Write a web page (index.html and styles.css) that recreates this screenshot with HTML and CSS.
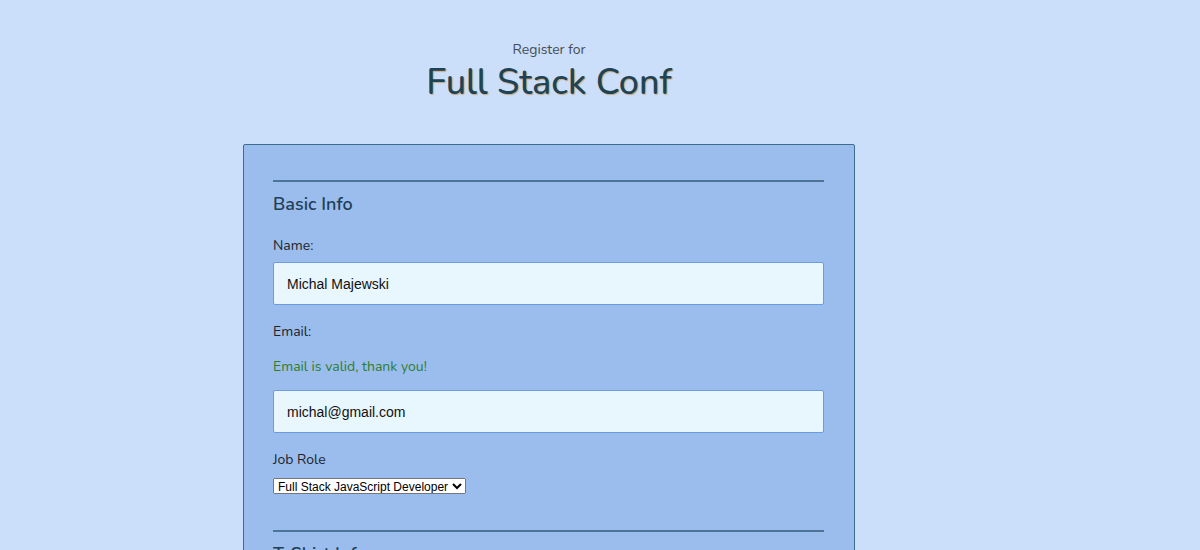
FILE: index.html
```html
<!DOCTYPE html>
<html>
<head>
<meta charset="utf-8">
<link rel="stylesheet" href="styles.css">
</head>
<body>
<div class="page">
<header class="header">
  <span class="pre">Register for</span>
  <h1 class="title">Full Stack Conf</h1>
</header>
<main class="card">
  <section class="section">
    <h2 class="section-title">Basic Info</h2>
    <label class="label">Name:</label>
    <input class="field" type="text" value="Michal Majewski">
    <label class="label">Email:</label>
    <p class="hint">Email is valid, thank you!</p>
    <input class="field" type="text" value="michal@gmail.com">
    <label class="label">Job Role</label>
    <select class="select"><option>Full Stack JavaScript Developer</option></select>
  </section>
  <section class="section">
    <h2 class="section-title">T-Shirt Info</h2>
  </section>
</main>
</div>
</body>
</html>
```
FILE: styles.css
```css
html, body { margin: 0; padding: 0; }
body {
  background: #cbdffa;
  font-family: "Nunito", "Lato", sans-serif;
  color: #1e2a30;
}
.page {
  width: 612px;
  margin-left: 243px;
}
.header {
  display: flex;
  flex-direction: column;
  align-items: center;
  padding-top: 41px;
}
.pre {
  font-size: 14px;
  line-height: 18px;
  color: #444e55;
}
.title {
  margin: 0;
  font-size: 36px;
  line-height: 48px;
  font-weight: 500;
  color: #1e4356;
  text-shadow: 1px 1px 1px #c9a77a;
}
.card {
  margin-top: 37px;
  padding: 35px 30px 40px 29px;
  background: #9bbdee;
  border: 1px solid #3f6d8e;
  border-radius: 2px;
}
.section {
  border-top: 2px solid #4a7597;
  display: flex;
  flex-direction: column;
  align-items: flex-start;
  padding-bottom: 36px;
}
.section-title {
  margin: 12px 0 22px;
  font-size: 18px;
  line-height: 20px;
  font-weight: 600;
  color: #1f3f55;
}
.label {
  font-size: 14px;
  line-height: 20px;
  color: #1d2328;
  margin-bottom: 6px;
}
.hint {
  margin: 9px 0 13px;
  font-size: 14px;
  line-height: 20px;
  color: #2e7d2a;
}
.field {
  box-sizing: border-box;
  width: 551px;
  height: 43px;
  padding: 0 13px;
  margin-bottom: 17px;
  font-family: "Liberation Sans", Arial, sans-serif;
  font-size: 14px;
  color: #111;
  background: #e8f6fd;
  border: 1px solid #6d9be0;
  border-radius: 2px;
}
.select {
  font-family: "Liberation Sans", Arial, sans-serif;
  font-size: 12px;
  height: 16px;
  padding: 0;
  margin-top: 2px;
}
```
